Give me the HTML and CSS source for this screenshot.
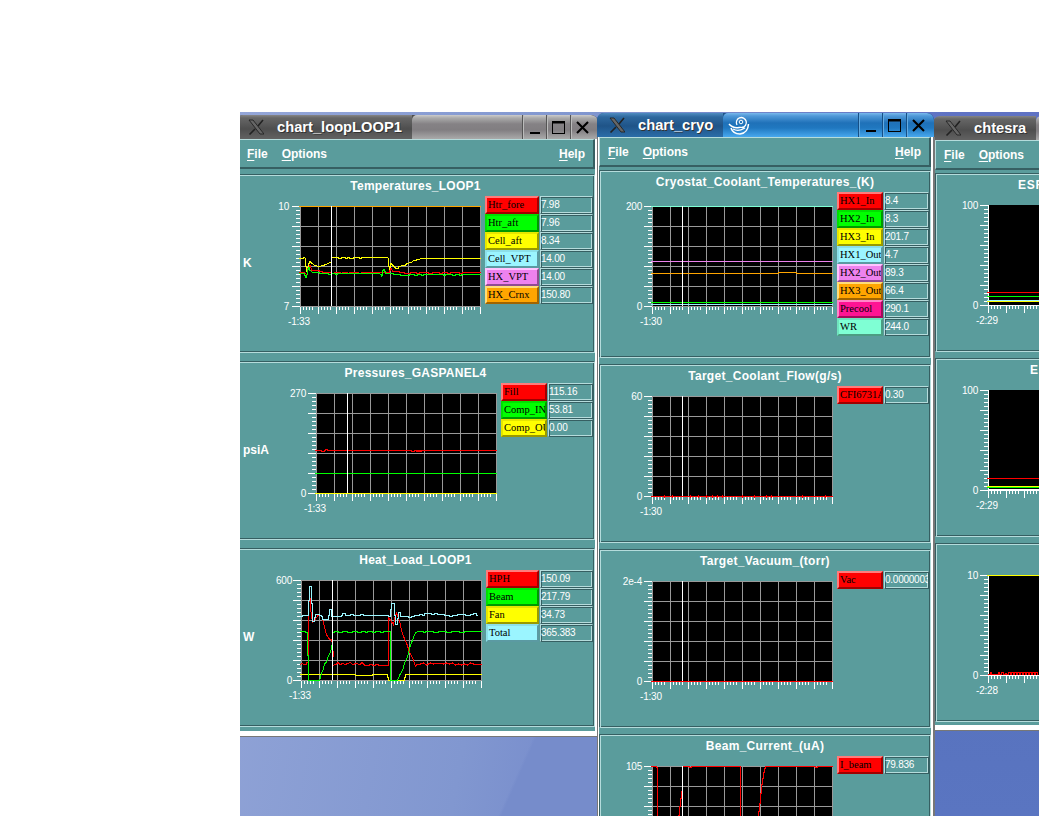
FILE: index.html
```html
<!DOCTYPE html>
<html lang="en">
<head>
<meta charset="utf-8">
<title>Strip charts</title>
<link rel="stylesheet" href="styles.css">
</head>
<body>
<svg class="defs" width="0" height="0">
  <defs>
    <g id="ticks">
      <path d="M-8 .5h8M-8 20.5h8M-8 40.5h8M-8 60.5h8M-8 80.5h8M-8 100.5h8" stroke="#fff"/>
      <path d="M-4 4.5h4m-4 4h4m-4 4h4m-4 4h4m-4 8h4m-4 4h4m-4 4h4m-4 4h4m-4 8h4m-4 4h4m-4 4h4m-4 4h4m-4 8h4m-4 4h4m-4 4h4m-4 4h4m-4 8h4m-4 4h4m-4 4h4m-4 4h4" stroke="#fff"/>
      <path d="M.5 101v7m18-7v7m18-7v7m18-7v7m18-7v7m18-7v7m18-7v7m18-7v7m18-7v7m18-7v7m18-7v7" stroke="#fff"/>
      <g id="xm"><path id="m4" d="M3.5 101v3m3-3v3m3-3v3m3-3v3" stroke="#fff"/><use href="#m4" x="18"/><use href="#m4" x="36"/><use href="#m4" x="54"/><use href="#m4" x="72"/></g>
      <use href="#xm" x="90"/>
    </g>
    <g id="grid">
      <rect width="181" height="101" fill="#000"/>
      <path d="M0 .5h181M0 20.5h181M0 40.5h181M0 60.5h181M0 80.5h181M0 100.5h181M.5 0v101M18.5 0v101M36.5 0v101M54.5 0v101M72.5 0v101M90.5 0v101M108.5 0v101M126.5 0v101M144.5 0v101M162.5 0v101M180.5 0v101" stroke="#999"/>
      <use href="#ticks"/>
    </g>
    <g id="plain">
      <rect width="181" height="101" fill="#000"/>
      <path d="M.5 0v101M0 100.5h181" stroke="#fff"/>
      <use href="#ticks"/>
    </g>
    <g id="xlogo">
      <path d="M1 1h4l11 14h-4z" fill="#666" stroke="#222" stroke-width=".9"/>
      <path d="M15 1L10 7M7 10L1.500 15.500" stroke="#222" stroke-width="1.600"/>
    </g>
    <g id="min"><path d="M7 17h10v2H7z"/></g>
    <g id="max"><path d="M5 6h13v13H5zM6 8.500v9.500h11V8.500z" fill-rule="evenodd"/></g>
    <g id="close"><path d="M6 7l11 11M17 7L6 18" stroke="#000" stroke-width="2.100"/></g>
  </defs>
</svg>
<main class="desktop">
  <section class="window w1">
    <header class="titlebar">
      <div class="caption"><svg class="xicon"><use href="#xlogo"/></svg><span>chart_loopLOOP1</span></div>
      <div class="bar"></div>
      <svg class="btn"><use href="#min"/></svg><svg class="btn"><use href="#max"/></svg><svg class="btn last"><use href="#close"/></svg>
    </header>
    <div class="client">
      <nav class="menu"><span><u>F</u>ile</span><span><u>O</u>ptions</span><span class="help"><u>H</u>elp</span></nav>
      <article class="panel">
        <h2>Temperatures_LOOP1</h2>
        <div class="body">
          <span class="unit">K</span>
          <svg class="chart" viewBox="-40 -10 225 145">
            <use href="#grid"/>
            <path class="orange" d="M-1 .5H181"/>
            <path class="yellow" d="M-1 52.500H3l1-1h1l1 9 1 5 2-8 1-2 2 2 3 2 4 1 4-1 3-1 4-2 2-1"/>
            <path class="yellow" d="M31 51.500h7v1h3v-1h4v1h2v-1h2v1h4v-1h6v1h2v-1h27l1 9v6l2-9 2 2 3 3h2l1-2 4-1h2l2-2 4-1 3-2 5-1 2-1H181"/>
            <path class="red" d="M-1 66.500h5l3 2 1-6 2-3 2 5h7v1h3v1h9v1h3v-1h6v1h2v-1h5v1h2v-1h9v1h3v-1h28l2-4 2 3h6v1h5v1h6v-1h6v1h3v-1h9v1h4v-1h7v1h3v-1h5v1h3v-1h9v1h3v-1H181"/>
            <path class="green" d="M-1 67.500h5l2 4 1-2 1-6 1-2 1 3 3 2h5l3 1h7v1h3v-1h4v1h2v-1h42l2 1 1 2 1-6 1-1 2 4h7l1 1h6v1h9v-1h5v1h3v-1h4v1h2v-1h20v1h2v-1h7v1h3v-1h4v1h2v-1H181"/>
            <path class="white" d="M31.500 0v100"/>
            <text x="-11" y="4" class="end">10</text><text x="-11" y="104" class="end">7</text><text x="-12" y="119">-1:33</text>
          </svg>
          <dl class="legend wide">
            <dt class="lr">Htr_fore</dt><dd>7.98</dd>
            <dt class="lg">Htr_aft</dt><dd>7.96</dd>
            <dt class="ly">Cell_aft</dt><dd>8.34</dd>
            <dt class="lc">Cell_VPT</dt><dd>14.00</dd>
            <dt class="lv">HX_VPT</dt><dd>14.00</dd>
            <dt class="lo">HX_Crnx</dt><dd>150.80</dd>
          </dl>
        </div>
      </article>
      <article class="panel">
        <h2>Pressures_GASPANEL4</h2>
        <div class="body">
          <span class="unit">psiA</span>
          <svg class="chart" viewBox="-40 -10 225 145">
            <use href="#grid"/>
            <path class="red" d="M-1 57.500h6v1h3v-1h1v-1h2v1h84v1h3v-1h2v1h1v-1h1v1h1v-1h1v1h1v-1H181"/>
            <path class="green" d="M-1 80.500H181"/><path class="yellow" d="M-1 100.500H181"/>
            <path class="white" d="M31.500 0v100"/>
            <text x="-10" y="4" class="end">270</text><text x="-10" y="104" class="end">0</text><text x="-12" y="119">-1:33</text>
          </svg>
          <dl class="legend">
            <dt class="lr">Fill</dt><dd>115.16</dd>
            <dt class="lg">Comp_IN</dt><dd>53.81</dd>
            <dt class="ly">Comp_OU</dt><dd>0.00</dd>
          </dl>
        </div>
      </article>
      <article class="panel">
        <h2>Heat_Load_LOOP1</h2>
        <div class="body">
          <span class="unit">W</span>
          <svg class="chart" viewBox="-40 -10 225 145">
            <use href="#grid"/>
            <path class="yellow" d="M-1 94.500H54v1h17v-1H86v3h1v3h16v-3h1v-3H181"/>
            <path class="red" d="M-1 84.500l2-1 2 1h2l1-2h1.500V40l1-34 1 22 2 14 3-3 3-4h3l2 8 3 12 3 4h2l1 6 1 12"/>
            <path class="red" d="M31 85.500l4-1 2-2 2 2 3-1 2 1 3-1 2-1 3 2 3-1 4 1 2-2 3 3h3l3-1 3 1 3-1 3 1h8.500V37l5 8 1-6 2-6 3 8 3 13 4 9 3 9 3 6 3 8 2-2h3l3-1 3 2 4-2 3 1 3-1h4l3 1 3-1 3 1 3-1 3 2 3-1 3 1 3-1 3 1 3-2 3 1H181"/>
            <path class="green" d="M-1 51.500h5l1 1h1v23h1.500v25h11l2-7 2-5 1-5 2-1 2-7 2-3 1-5 1-4"/>
            <path class="green" d="M31 52.500h2v-1h4v1h4v-1h5v1h5v-1h5v1h4v-1h4v1h2v-1h5v1h3v-1h5v1h3v-1h7.500V100.500h7l2-5 3-5 2-7 3-7 3-11 3-8 2-5 3-1h5v1h2v-1h8v1h5v-1h8v1h5v-1h8v1h5v-1H181"/>
            <path class="cyan" d="M-1 36.500h2l1-1h5v-15h1V6.500h2v17h1v18h2v-4h1v-3h4v1h2v1h1v3h6v-4h1v-6h2v7h10v-1h1v-2h3v2h5v-1h3v1h7v-1h3v1h25v1h2v-7h1v-6h3v12h1v9h2v-6h1v-6h2v4h8v1h3v-1h3v-1h5v-1h3v1h2v-2h7v1h3v-1h3v1h7v1h5v1h3v-1h5v-1h8v1h5v-1h3v-1h3v2h2"/>
            <path class="white" d="M31.500 0v100"/>
            <text x="-9" y="4" class="end">600</text><text x="-9" y="104" class="end">0</text><text x="-12" y="119">-1:33</text>
          </svg>
          <dl class="legend wide h">
            <dt class="lr">HPH</dt><dd>150.09</dd>
            <dt class="lg">Beam</dt><dd>217.79</dd>
            <dt class="ly">Fan</dt><dd>34.73</dd>
            <dt class="lc">Total</dt><dd>365.383</dd>
          </dl>
        </div>
      </article>
    </div>
  </section>

  <section class="window w3">
    <header class="titlebar">
      <div class="caption"><svg class="xicon"><use href="#xlogo"/></svg><span>chtesra</span></div>
      <div class="bar"></div>
    </header>
    <div class="client">
      <nav class="menu"><span><u>F</u>ile</span><span><u>O</u>ptions</span></nav>
      <article class="panel">
        <h2>ESR</h2>
        <div class="body">
          <svg class="chart" viewBox="-40 -10 225 145">
            <use href="#plain"/>
            <path class="red" d="M-1 87.500H181"/><path class="green" d="M-1 91.500H181"/><path class="cyan" d="M-1 95.500H181"/><path class="yellow" d="M-1 96.500H181"/>
            <text x="-10" y="4" class="end">100</text><text x="-10" y="104" class="end">0</text><text x="-12" y="119">-2:29</text>
          </svg>
        </div>
      </article>
      <article class="panel">
        <h2 class="late">E</h2>
        <div class="body">
          <svg class="chart" viewBox="-40 -10 225 145">
            <use href="#plain"/>
            <path class="red" d="M-1 88.500H181"/><path class="yellow" d="M-1 96.500H181"/><path class="green" d="M-1 97.500H181"/><path class="white" d="M0 99.500H181"/>
            <text x="-10" y="4" class="end">100</text><text x="-10" y="104" class="end">0</text><text x="-12" y="119">-2:29</text>
          </svg>
        </div>
      </article>
      <article class="panel">
        <h2></h2>
        <div class="body">
          <svg class="chart" viewBox="-40 -10 225 145">
            <use href="#plain"/>
            <path class="yellow" d="M-1 .5H181"/>
            <path class="red" d="M0 99.500h2v-2h1v2h7v-2h1v2h2v-2h2v2h2v-1h1v1h2v-2h2v2h1v-2h2v2h1v-2h2v2h1v-2h2v2h1v-2h2v2h1v-2h2v2h1v-2h2v2h1v-2h2v2h1v-2h2v2h1v-2h2v2"/>
            <text x="-10" y="4" class="end">10</text><text x="-10" y="104" class="end">0</text><text x="-12" y="119">-2:28</text>
          </svg>
        </div>
      </article>
    </div>
  </section>

  <section class="window w2">
    <header class="titlebar">
      <div class="caption"><svg class="xicon"><use href="#xlogo"/></svg><span>chart_cryo</span></div>
      <div class="bar">
        <svg class="swirl" viewBox="0 0 22 20" fill="none" stroke="#fff"><circle cx="13" cy="6" r="1.800"/><path d="M9 9a5 5 0 1 1 5 2.500" stroke-width="1.300"/><path d="M1 8q4 4.500 10 3.500q4-.5 6 1" stroke-width="1.500"/><path d="M3 12q2 6 9 6q8-1 8.500-10" stroke-width="1.500"/><path d="M5 13q5 3 11-.5" stroke-width="1.200"/></svg>
      </div>
      <svg class="btn"><use href="#min"/></svg><svg class="btn"><use href="#max"/></svg><svg class="btn last"><use href="#close"/></svg>
    </header>
    <div class="client">
      <nav class="menu"><span><u>F</u>ile</span><span><u>O</u>ptions</span><span class="help"><u>H</u>elp</span></nav>
      <article class="panel tall">
        <h2>Cryostat_Coolant_Temperatures_(K)</h2>
        <div class="body">
          <svg class="chart" viewBox="-40 -10 225 145">
            <use href="#grid"/>
            <path class="aqua" d="M-1 .5H181"/><path class="violet" d="M-1 55.500H181"/><path class="orange" d="M-1 67.500H126v-1h18v1H181"/>
            <path class="green" d="M-1 96.500H181"/><path class="cyan" d="M-1 98.500H181"/>
            <path class="white" d="M30.500 0v100"/>
            <text x="-10" y="4" class="end">200</text><text x="-10" y="104" class="end">0</text><text x="-12" y="119">-1:30</text>
          </svg>
          <dl class="legend">
            <dt class="lr">HX1_In</dt><dd>8.4</dd>
            <dt class="lg">HX2_In</dt><dd>8.3</dd>
            <dt class="ly">HX3_In</dt><dd>201.7</dd>
            <dt class="lc">HX1_Out</dt><dd>4.7</dd>
            <dt class="lv">HX2_Out</dt><dd>89.3</dd>
            <dt class="lo">HX3_Out</dt><dd>66.4</dd>
            <dt class="lp">Precool</dt><dd>290.1</dd>
            <dt class="la">WR</dt><dd>244.0</dd>
          </dl>
        </div>
      </article>
      <article class="panel">
        <h2>Target_Coolant_Flow(g/s)</h2>
        <div class="body">
          <svg class="chart" viewBox="-40 -10 225 145">
            <use href="#grid"/>
            <path class="red" d="M-1 100.500H181M12.500 99v3M20.500 99v3M38.500 99v3M46.500 99v3M54.500 99v3M60.500 99v3M65.500 99v3M70.500 99v3M90.500 99v3M102.500 99v3M114.500 99v3M119.500 99v3M150.500 99v3M173.500 99v3"/>
            <path class="white" d="M30.500 0v100"/>
            <text x="-10" y="4" class="end">60</text><text x="-10" y="104" class="end">0</text><text x="-12" y="119">-1:30</text>
          </svg>
          <dl class="legend"><dt class="lr">CFI6731A</dt><dd>0.30</dd></dl>
        </div>
      </article>
      <article class="panel">
        <h2>Target_Vacuum_(torr)</h2>
        <div class="body">
          <svg class="chart" viewBox="-40 -10 225 145">
            <use href="#grid"/>
            <path class="red" d="M-1 100.500H181"/>
            <path class="white" d="M30.500 0v100"/>
            <text x="-10" y="4" class="end">2e-4</text><text x="-10" y="104" class="end">0</text><text x="-12" y="119">-1:30</text>
          </svg>
          <dl class="legend"><dt class="lr">Vac</dt><dd>0.0000003</dd></dl>
        </div>
      </article>
      <article class="panel">
        <h2>Beam_Current_(uA)</h2>
        <div class="body">
          <svg class="chart" viewBox="-40 -10 225 145">
            <use href="#grid"/>
            <path class="red" d="M-1 .5h5v1h1.500V100M26.500 60v-11h1v-9h1v-8h1v-7M31 .5h6v1h2v-1H88.500V100M106.500 60v-15h1v-8h1v-10h1v-9h1v-6h1v-6h1v-4h1v-2H163v1h2v-1H181"/>
            <path class="white" d="M30.500 0v100"/>
            <text x="-10" y="4" class="end">105</text>
          </svg>
          <dl class="legend"><dt class="lr">I_beam</dt><dd>79.836</dd></dl>
        </div>
      </article>
    </div>
  </section>
</main>
</body>
</html>
```
FILE: styles.css
```css
* { box-sizing: border-box; margin: 0; padding: 0; }
body {
  width: 1039px; height: 816px; overflow: hidden; background: #fff;
  padding: 112px 0 0 240px;
  font-family: "Liberation Sans", Arial, sans-serif;
}
.defs { position: absolute; }
.desktop {
  position: relative; width: 799px; height: 704px; overflow: hidden;
  background:
    linear-gradient(#5873bf, #5a75c1) 694px 600px / 105px 104px no-repeat,
    linear-gradient(114deg, transparent 278px, #768ccb 281px) 0 600px / 357px 104px no-repeat,
    linear-gradient(100deg, #94a6d8 0, #8197d0 330px, #5f72c3 700px);
}

/* Windows are free-standing objects on the desktop. */
.window { position: absolute; }
.w1 { left: -4px; top: 3px; width: 362px; }
.w2 { left: 357px; top: 1px; width: 337px; }
.w3 { left: 693px; top: 4px; width: 335px; }

.titlebar { display: flex; height: 24px; color: #fff; border-radius: 7px 7px 0 0; overflow: hidden; }
.caption {
  display: flex; align-items: center; gap: 13px; padding-left: 12px;
  font-weight: bold; font-size: 14.7px; line-height: 24px;
  background: linear-gradient(#858585 0, #666 3px, #4e4e4e 14px, #626262);
}
.caption span { white-space: nowrap; text-shadow: 1px 1px 0 #333; }
.xicon { width: 16px; height: 17px; flex: none; }
.bar, .btn { background: linear-gradient(#ccc 0, #aaa 3px, #858285 9px, #817e81 15px, #aaa 24px); }
.bar { flex: 1; border-radius: 5px 0 0 0; padding-left: 5px; }
.titlebar .btn { flex: none; width: 24px; height: 24px; border-left: 1px solid #555; box-shadow: inset 1px 0 #bbb; }
.titlebar .last { width: 28px; border-radius: 0 7px 0 0; }
.w1 .titlebar { background: #4e4e4e; }
.w1 .caption { width: 176px; }
.w2 .caption { width: 126px; background: linear-gradient(#4f8cc0 0, #2e689e 4px, #1f5488 13px, #2b6da8); }
.w2 .bar, .w2 .btn { background: linear-gradient(#79b9ec 0, #4f98d8 3px, #1f71b8 10px, #2078c0 15px, #48a8ee 24px); }
.w2 .titlebar .btn { border-left-color: #164f85; box-shadow: inset 1px 0 #63abe2; }
.w2 .titlebar { background: #1f5488; }
.w3 .caption { width: 103px; }
.swirl { display: block; width: 22px; height: 20px; margin-top: 3px; }

.client { background: #5a9c9c; border: solid #fff; }
.w1 .client { width: 361px; height: 597px; border-width: 0 2px 5px; border-left-color: #5a9c9c; box-shadow: 1px 1px #777; }
.w2 .client { width: 335px; height: 700px; margin-left: 1px; border-width: 0 2px 0 1px; box-shadow: 2px 0 #777, -1px 0 #777; }
.w3 .client { width: 337px; height: 590px; margin-left: 1px; border-width: 0 2px 5px 1px; box-shadow: -1px 1px #777; }

.menu {
  display: flex; gap: 14px; height: 30px; padding: 7px 8px 0 8px;
  border: solid; border-width: 1px 2px 2px 1px;
  border-color: #b5dcdc #365f62 #365f62 #b5dcdc;
  color: #fff; font-weight: bold; font-size: 12px; line-height: 14px;
}
.menu u { text-underline-offset: 2px; }
.help { margin-left: auto; }
.w1 .menu { margin-bottom: 5px; }
.w2 .menu { margin-bottom: 3px; }
.w3 .menu { margin-bottom: 3px; }

.panel {
  height: 179px; margin-bottom: 8px; overflow: hidden; color: #fff;
  border: 1px solid; border-color: #365f62 #b5dcdc #b5dcdc #365f62;
  box-shadow: inset 1px 1px #b5dcdc, inset -1px -1px #365f62;
  padding: 1px 1px 0 1px;
}
.w2 .panel, .w3 .panel { margin-bottom: 6px; }
.w2 .tall { height: 188px; }
.panel h2 { height: 20px; font-size: 12px; line-height: 20px; letter-spacing: .3px; text-align: center; }
.w1 .panel h2 { padding-right: 2px; letter-spacing: .25px; }
.w3 .panel h2 { text-align: left; padding-left: 81px; letter-spacing: .8px; }
.w3 .panel .late { padding-left: 93px; }
.body { display: flex; justify-content: flex-end; align-items: flex-start; }
.w3 .body { justify-content: flex-start; padding-left: 11px; }
.unit { margin: 60px auto 0 3px; width: 0; font-size: 12px; line-height: 14px; font-weight: bold; }
.chart { flex: none; width: 225px; height: 145px; shape-rendering: crispEdges; fill: none; }
.chart text { fill: #fff; font: 10px "Liberation Sans", Arial, sans-serif; letter-spacing: -.2px; }
.chart .end { text-anchor: end; }
.tall .chart { margin-top: 4px; }
.red { stroke: #f00; } .green { stroke: #0f0; } .yellow { stroke: #ff0; } .cyan { stroke: #9bf5ff; }
.orange { stroke: #ffa500; } .violet { stroke: #ee82ee; } .aqua { stroke: #7fffd4; } .white { stroke: #fff; }

.legend { display: grid; grid-template-columns: 46px 46px; grid-auto-rows: 18px; flex: none; }
.wide { grid-template-columns: 54px 54px; }
.h { grid-template-columns: 53px 54px; }
.legend dt {
  overflow: hidden; white-space: nowrap; color: #000; padding-left: 1px;
  font: 10.5px/14px "Liberation Serif", "Times New Roman", serif;
  border: 2px solid;
}
.legend dd {
  overflow: hidden; margin: 0 0 0 1px; padding-left: 0; font-size: 10px; line-height: 16px; letter-spacing: -.25px;
  border: 1px solid; border-color: #b5dcdc #365f62 #365f62 #b5dcdc;
  box-shadow: inset 1px 1px #365f62, inset -1px -1px #b5dcdc;
}
.legend .lr { background: #f00; border-color: #ff7b7b #a00000 #a00000 #ff7b7b; }
.legend .lg { background: #0f0; border-color: #00e000 #009800 #009800 #00e000; }
.legend .ly { background: #ff0; border-color: #e6e600 #999900 #999900 #e6e600; }
.legend .lc { background: #9bf5ff; border-color: #8ce0ea #5b9aa2 #5b9aa2 #8ce0ea; }
.legend .lv { background: #ee82ee; border-color: #ffc4ff #904c90 #904c90 #ffc4ff; }
.legend .lo { background: #ffa500; border-color: #ffdc78 #a06400 #a06400 #ffdc78; }
.legend .lp { background: #ff1493; border-color: #ff86c8 #a00c5a #a00c5a #ff86c8; }
.legend .la { background: #7fffd4; border-color: #70e4be #4c9c82 #4c9c82 #70e4be; }
```
